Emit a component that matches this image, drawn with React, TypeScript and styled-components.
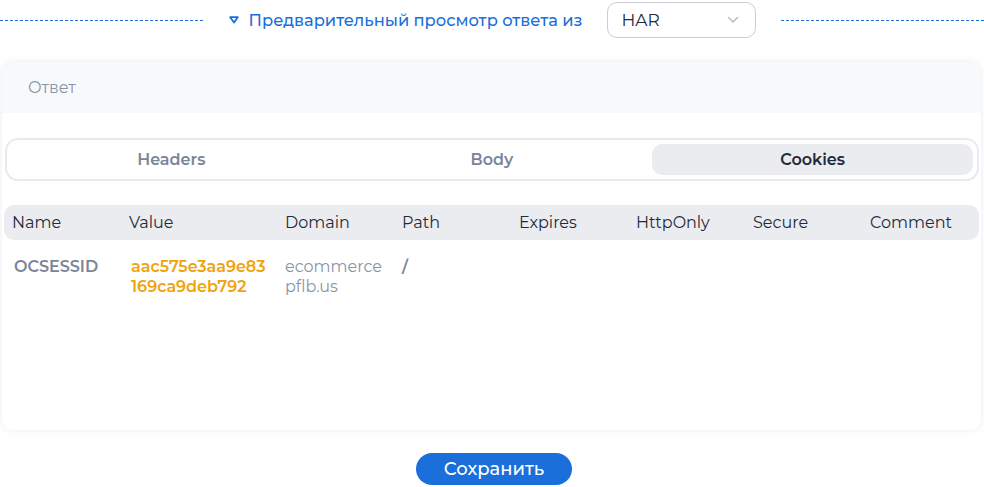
import React from "react";
import styled, { createGlobalStyle } from "styled-components";

const GlobalStyle = createGlobalStyle`
  html, body {
    margin: 0;
    padding: 0;
    background: #ffffff;
    font-family: Montserrat, Inter, "Noto Sans", sans-serif;
  }
  * {
    box-sizing: border-box;
  }
`;

const Page = styled.div`
  width: 984px;
  padding-top: 2px;
`;

const TopBar = styled.div`
  display: flex;
  align-items: center;
  height: 36px;
`;

const DashLine = styled.div`
  flex: 1;
  border-top: 1px dashed #1a6fdb;
`;

const PreviewToggle = styled.button`
  display: flex;
  align-items: center;
  gap: 10px;
  margin: 0 25px 0 26px;
  padding: 0;
  border: none;
  background: none;
  color: #1a6fdb;
  font-family: inherit;
  font-size: 16.3px;
  font-weight: 500;
  cursor: pointer;
`;

const SourceSelect = styled.div`
  display: flex;
  align-items: center;
  justify-content: space-between;
  width: 149px;
  height: 36px;
  margin-right: 25px;
  padding: 0 16px 0 13px;
  border: 1px solid #c9ced6;
  border-radius: 10px;
  color: #1f2a3c;
  font-size: 17px;
`;

const Card = styled.section`
  margin: 24px 3px 0 2px;
  height: 368px;
  background: #ffffff;
  border-radius: 10px;
  box-shadow: 0 0 6px rgba(170, 180, 200, 0.25);
  overflow: hidden;
`;

const CardHeader = styled.div`
  height: 51px;
  display: flex;
  align-items: center;
  padding-left: 26px;
  background: #f8f9fa;
  color: #8a94a6;
  font-size: 16px;
`;

const Tabs = styled.div`
  display: grid;
  grid-template-columns: repeat(3, 1fr);
  margin: 25px 2px 0 3px;
  height: 43px;
  padding: 4px 4px;
  border: 2px solid #e8eaee;
  border-radius: 13px;
`;

const Tab = styled.div<{ active?: boolean }>`
  display: flex;
  align-items: center;
  justify-content: center;
  border-radius: 10px;
  background: ${(p) => (p.active ? "#ebecf0" : "transparent")};
  color: ${(p) => (p.active ? "#1e2a3b" : "#7b8597")};
  font-size: 16px;
  font-weight: 600;
`;

const Table = styled.div`
  margin: 24px 2px 0 2px;
`;

const columns = "117px 156px 117px 117px 117px 117px 117px 117px";

const HeadRow = styled.div`
  display: grid;
  grid-template-columns: ${columns};
  height: 35px;
  align-items: center;
  background: #ebecf0;
  border-radius: 10px;
`;

const HeadCell = styled.div`
  padding-left: 8px;
  color: #1f2a3c;
  font-size: 16px;
`;

const BodyRow = styled.div`
  display: grid;
  grid-template-columns: ${columns};
  padding-top: 17px;
`;

const Cell = styled.div<{ tone?: "name" | "value" | "plain" | "path" }>`
  padding: 0 8px 0 ${(p) => (p.tone === "name" || p.tone === "value" ? "10px" : "8px")};
  font-size: 16px;
  line-height: 20px;
  word-break: break-all;
  font-weight: ${(p) => (p.tone === "plain" ? 400 : 600)};
  color: ${(p) =>
    p.tone === "value" ? "#f0a30a" : p.tone === "plain" ? "#8a94a6" : "#7b8597"};
`;

const Footer = styled.div`
  display: flex;
  justify-content: center;
  margin-top: 23px;
  padding-left: 4px;
`;

const SaveButton = styled.button`
  width: 156px;
  height: 32px;
  border: none;
  border-radius: 16px;
  background: #1a6fdb;
  color: #ffffff;
  font-family: inherit;
  font-size: 18px;
  font-weight: 500;
  cursor: pointer;
`;

const heads = ["Name", "Value", "Domain", "Path", "Expires", "HttpOnly", "Secure", "Comment"];

const App = () => {
  return (
    <>
      <GlobalStyle />
      <Page>
        <TopBar>
          <DashLine />
          <PreviewToggle>
            <svg width="10" height="8" viewBox="0 0 10 8">
              <path d="M1.2 1.2h7.6L5 6.6z" fill="none" stroke="#1a6fdb" strokeWidth="1.8" strokeLinejoin="round" />
            </svg>
            Предварительный просмотр ответа из
          </PreviewToggle>
          <SourceSelect>
            HAR
            <svg width="12" height="8" viewBox="0 0 12 8">
              <path d="M1.5 1.5l4.5 4.5 4.5-4.5" fill="none" stroke="#b7bdc7" strokeWidth="1.5" strokeLinecap="round" />
            </svg>
          </SourceSelect>
          <DashLine />
        </TopBar>

        <Card>
          <CardHeader>Ответ</CardHeader>
          <Tabs>
            <Tab>Headers</Tab>
            <Tab>Body</Tab>
            <Tab active>Cookies</Tab>
          </Tabs>
          <Table>
            <HeadRow>
              {heads.map((h) => (
                <HeadCell key={h}>{h}</HeadCell>
              ))}
            </HeadRow>
            <BodyRow>
              <Cell tone="name">OCSESSID</Cell>
              <Cell tone="value">aac575e3aa9e83169ca9deb792</Cell>
              <Cell tone="plain">ecommerce pflb.us</Cell>
              <Cell tone="path">/</Cell>
              <Cell />
              <Cell />
              <Cell />
              <Cell />
            </BodyRow>
          </Table>
        </Card>

        <Footer>
          <SaveButton>Сохранить</SaveButton>
        </Footer>
      </Page>
    </>
  );
};

export default App;
